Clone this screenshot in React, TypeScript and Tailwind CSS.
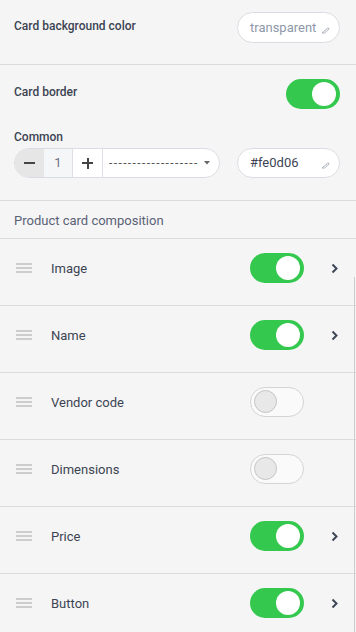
import React from "react";

const items = [
  { label: "Image", on: true, more: true },
  { label: "Name", on: true, more: true },
  { label: "Vendor code", on: false, more: false },
  { label: "Dimensions", on: false, more: false },
  { label: "Price", on: true, more: true },
  { label: "Button", on: true, more: true },
];

function Toggle({ on }: { on: boolean }) {
  if (on) {
    return (
      <div className="relative w-[54px] h-[30px] rounded-full bg-[#34c84e] shrink-0">
        <div className="absolute right-[4px] top-[3px] w-[24px] h-[24px] rounded-full bg-white" />
      </div>
    );
  }
  return (
    <div className="relative w-[54px] h-[30px] rounded-full bg-[#fafafa] border border-[#d4d4d4] shrink-0">
      <div className="absolute left-[3px] top-[2px] w-[23px] h-[23px] rounded-full bg-[#e8e8e8] border border-[#c4c4c4]" />
    </div>
  );
}

function PenIcon() {
  return (
    <svg width="9" height="7" viewBox="0 0 9 7" className="absolute right-[9px] bottom-[8px]">
      <path d="M1 6 L6.5 1.2 Q8 0.5 8 2 L3.5 6 Z" fill="none" stroke="#a3a9b4" strokeWidth="0.9" strokeLinejoin="round" />
    </svg>
  );
}

function Chevron() {
  return (
    <svg width="7" height="11" viewBox="0 0 7 11">
      <path d="M1.5 1.5 L5.5 5.5 L1.5 9.5" fill="none" stroke="#3e4758" strokeWidth="2" />
    </svg>
  );
}

function Handle() {
  return (
    <div className="w-4 flex flex-col gap-[2px] shrink-0">
      <div className="h-[2px] bg-[#cdcdcd]" />
      <div className="h-[2px] bg-[#cdcdcd]" />
      <div className="h-[2px] bg-[#cdcdcd]" />
    </div>
  );
}

export default function App() {
  return (
    <div
      className="relative w-[356px] h-[632px] overflow-hidden bg-[#f5f5f5] text-[#3c4453]"
      style={{ fontFamily: "Roboto, 'Liberation Sans', sans-serif" }}
    >
      {/* background color */}
      <div className="h-[65px] border-b border-[#dcdcdc] flex justify-between items-start pl-[14px] pr-4 pt-3">
        <div className="mt-[6px] text-[12px] leading-4 font-medium">Card background color</div>
        <div className="relative w-[103px] h-[31px] rounded-full bg-white border border-[#d9dde3] flex items-center pl-3 text-[13px] text-[#8e98aa]">
          transparent
          <PenIcon />
        </div>
      </div>

      {/* border */}
      <div className="h-[136px] border-b border-[#dcdcdc] pl-[14px] pr-4 pt-[14px]">
        <div className="flex justify-between items-start">
          <div className="mt-[5px] text-[12px] leading-4 font-medium">Card border</div>
          <Toggle on />
        </div>
        <div className="mt-[20px] text-[12px] leading-4 font-medium">Common</div>
        <div className="mt-[3px] flex justify-between items-center">
          <div className="flex h-[30px] w-[206px] rounded-full border border-[#d9dde3] overflow-hidden bg-white">
            <div className="w-[29px] bg-[#e6e6e6] flex items-center justify-center">
              <div className="w-[11px] h-[2px] bg-[#444]" />
            </div>
            <div className="w-[29px] bg-[#f5f6f8] border-r border-[#dcdfe4] flex items-center justify-center text-[13px] text-[#6b7280]">
              1
            </div>
            <div className="w-[30px] border-r border-[#dcdfe4] flex items-center justify-center">
              <div className="relative w-[11px] h-[11px]">
                <div className="absolute left-0 top-[4.5px] w-[11px] h-[2px] bg-[#444]" />
                <div className="absolute top-0 left-[4.5px] w-[2px] h-[11px] bg-[#444]" />
              </div>
            </div>
            <div className="flex-1 flex items-center pl-[6px] pr-[9px] text-[12px] text-[#555] tracking-[1.4px]">
              <span className="flex-1">-------------------</span>
              <svg width="6" height="4" viewBox="0 0 6 4">
                <path d="M0 0 L6 0 L3 3.5 Z" fill="#666" />
              </svg>
            </div>
          </div>
          <div className="relative w-[103px] h-[30px] rounded-full bg-white border border-[#d9dde3] flex items-center pl-3 text-[13px] text-[#3c4453]">
            #fe0d06
            <PenIcon />
          </div>
        </div>
      </div>

      {/* composition header */}
      <div className="h-[38px] border-b border-[#dcdcdc] pl-[14px] pt-[12px] text-[13px] leading-4 text-[#5a6275]">
        Product card composition
      </div>

      {items.map((it, i) => (
        <div
          key={it.label}
          className={"h-[67px] pl-4 pt-[14px] " + (i < items.length - 1 ? "border-b border-[#dcdcdc]" : "")}
        >
          <div className="h-[30px] flex items-center">
            <Handle />
            <div className="ml-[19px] flex-1 text-[13px] pt-[1px]">{it.label}</div>
            <Toggle on={it.on} />
            <div className="w-[52px] pl-[27px] flex items-center">{it.more && <Chevron />}</div>
          </div>
        </div>
      ))}

      <div className="absolute left-[354px] top-[277px] bottom-0 w-px bg-[#cccccc]" />
    </div>
  );
}
